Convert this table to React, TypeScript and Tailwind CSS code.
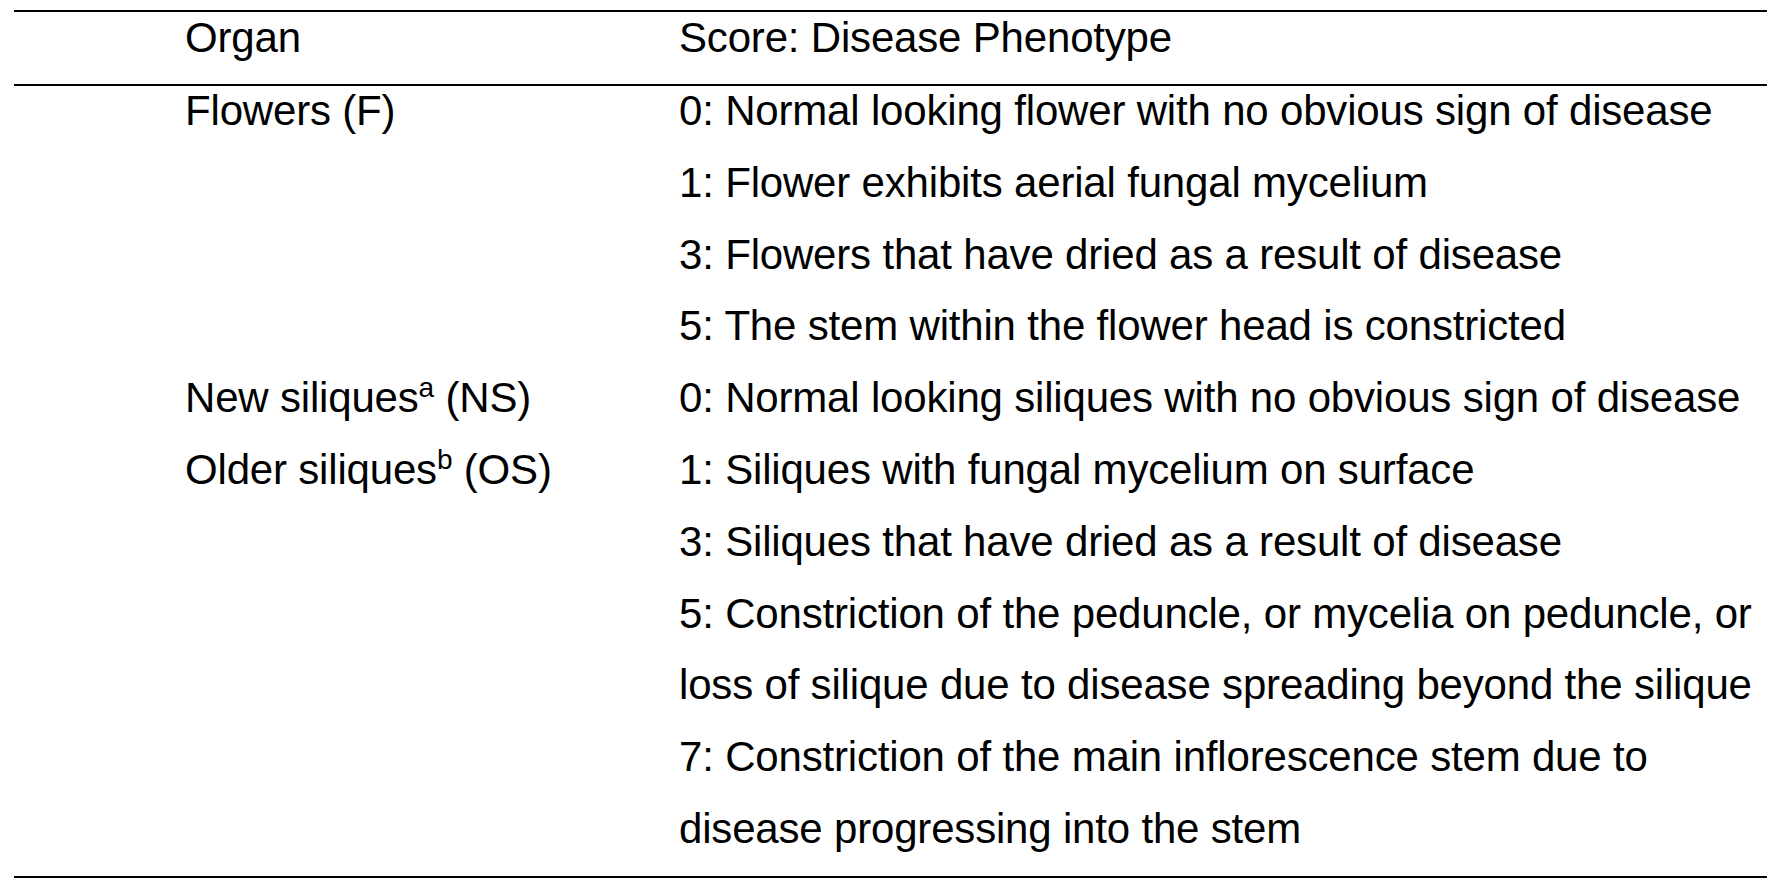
const groups = [
  {
    organs: [<>Flowers (F)</>],
    scores: [
      ["0: Normal looking flower with no obvious sign of disease"],
      ["1: Flower exhibits aerial fungal mycelium"],
      ["3: Flowers that have dried as a result of disease"],
      ["5: The stem within the flower head is constricted"],
    ],
  },
  {
    organs: [
      <>
        New siliques<sup className="text-[28px] -top-[15px]">a</sup> (NS)
      </>,
      <>
        Older siliques<sup className="text-[28px] -top-[15px]">b</sup> (OS)
      </>,
    ],
    scores: [
      ["0: Normal looking siliques with no obvious sign of disease"],
      ["1: Siliques with fungal mycelium on surface"],
      ["3: Siliques that have dried as a result of disease"],
      [
        "5: Constriction of the peduncle, or mycelia on peduncle, or",
        "loss of silique due to disease spreading beyond the silique",
      ],
      [
        "7: Constriction of the main inflorescence stem due to",
        "disease progressing into the stem",
      ],
    ],
  },
];

export default function App() {
  return (
    <div className="min-h-screen bg-white text-black font-['Liberation_Sans',Arial,sans-serif] text-[42px] tracking-[-0.18px] leading-[50px]">
      <div className="ml-[14px] mt-[10px] border-t-2 border-b-2 border-black">
        {/* header */}
        <div className="flex pl-[171px] pt-[1px] pb-[21px] border-b-2 border-black">
          <div className="w-[494px] shrink-0">Organ</div>
          <div>Score: Disease Phenotype</div>
        </div>

        {/* body */}
        <div className="flex flex-col gap-[21.8px] pl-[171px] pb-[22px]">
          {groups.map((g, i) => (
            <div key={i} className="flex">
              <div className="w-[494px] shrink-0 flex flex-col gap-[21.8px]">
                {g.organs.map((o, j) => (
                  <div key={j} className="whitespace-nowrap">
                    {o}
                  </div>
                ))}
              </div>
              <div className="flex flex-col gap-[21.8px]">
                {g.scores.flat().map((line) => (
                  <div key={line} className="whitespace-nowrap">
                    {line}
                  </div>
                ))}
              </div>
            </div>
          ))}
        </div>
      </div>
    </div>
  );
}
